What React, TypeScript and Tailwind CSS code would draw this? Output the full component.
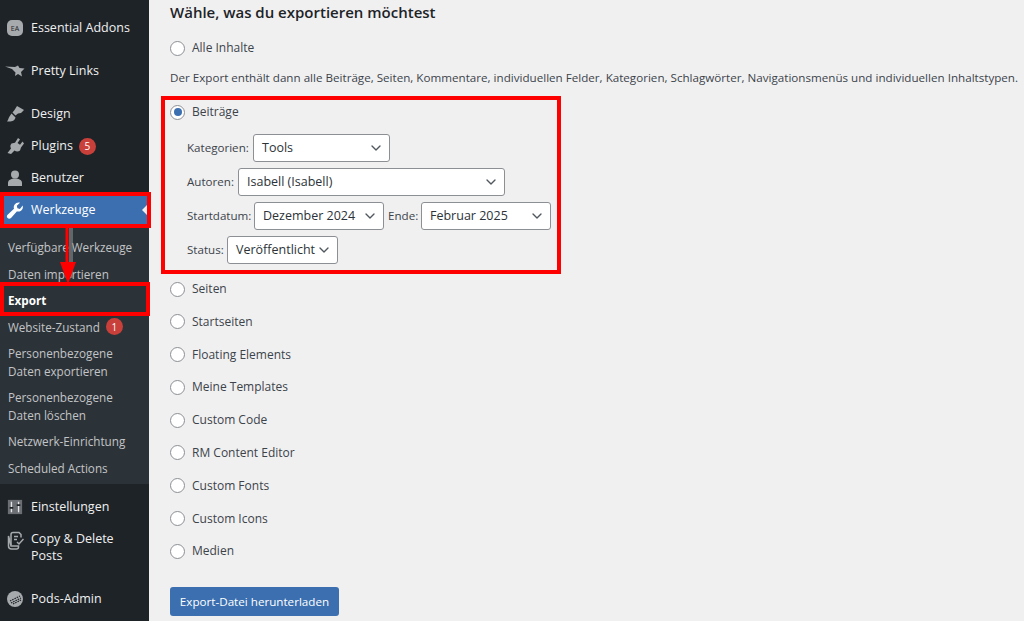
import { ChevronDown } from 'lucide-react';
import type { ReactNode } from 'react';

const font = "font-['Open_Sans','Noto_Sans',sans-serif]";

function Radio({ label, checked = false, className = '' }: { label: string; checked?: boolean; className?: string }) {
  return (
    <div className={`flex items-center gap-[7px] ${className}`}>
      <span className="flex h-[15px] w-[15px] items-center justify-center rounded-full border border-[#8c8f94] bg-white">
        {checked && <span className="h-[8px] w-[8px] rounded-full bg-[#3b6fb0]" />}
      </span>
      <span className="text-[12px] text-[#3c434a]">{label}</span>
    </div>
  );
}

function Select({ value, className }: { value: string; className: string }) {
  return (
    <div className={`flex h-[28px] items-center justify-between rounded-[3px] border border-[#8c8f94] bg-white pl-[8px] pr-[5px] text-[12.5px] text-[#2c3338] ${className}`}>
      <span className="whitespace-nowrap">{value}</span>
      <ChevronDown size={16} strokeWidth={2} className="text-[#50575e]" />
    </div>
  );
}

function MenuItem({ icon, children, className = '' }: { icon: ReactNode; children: ReactNode; className?: string }) {
  return (
    <div className={`flex items-center text-[12.5px] text-[#f0f0f1] ${className}`}>
      <span className="flex w-[31px] shrink-0 justify-center pr-[2px] text-[#a7aaad]">{icon}</span>
      {children}
    </div>
  );
}

function Sub({ children, className = 'h-[26.5px]' }: { children: ReactNode; className?: string }) {
  return <div className={`flex items-center pl-[8px] text-[11.7px] leading-[18px] text-[#c3c4c7] ${className}`}>{children}</div>;
}

function Badge({ n }: { n: number }) {
  return (
    <span className="ml-[6px] flex h-[17px] w-[17px] items-center justify-center rounded-full bg-[#c9403a] text-[10px] text-white">{n}</span>
  );
}

const ic = 'h-[18px] w-[18px] fill-current';
const row = 'flex h-[28px] items-center gap-[3px] pl-[17px] text-[11.6px] text-[#3c434a]';

export default function App() {
  return (
    <div className={`relative flex h-[621px] w-[1024px] overflow-hidden bg-[#f0f0f1] ${font}`}>
      <aside className="flex w-[149px] shrink-0 flex-col bg-[#1d2327]">
        <MenuItem className="mt-[16px] h-[24px]" icon={
          <svg viewBox="0 0 18 18" className={ic}><rect x="1" y="1" width="16" height="16" rx="5" /><text x="9" y="12" textAnchor="middle" fontSize="7" fill="#1d2327">EA</text></svg>
        }>Essential Addons</MenuItem>
        <MenuItem className="mt-[19px] h-[24px]" icon={
          <svg viewBox="0 0 20 18" className="h-[18px] w-[20px] fill-current"><path d="M0 4.500l10 .5 3-1.500 1.500 2.500 5 .5-3.500 3.500 1 4.500-4-2.500-3 2 .5-3.500L7 7z" /></svg>
        }>Pretty Links</MenuItem>
        <MenuItem className="mt-[19px] h-[24px]" icon={
          <svg viewBox="0 0 18 18" className={ic}><path d="M11 1l7 4-3 3-3 .5-2.500 2-3-3 2-2.500zM5.500 8.500l4 4c-.5 2-1.500 3-3 3.500-2 .5-4 .7-5.500.5C2.500 15 2 13.500 3.500 11.500z" /></svg>
        }>Design</MenuItem>
        <MenuItem className="mt-[8px] h-[24px]" icon={
          <svg viewBox="0 0 18 18" className={ic}><path d="M12 1l2 1.500-2.500 3.500 2.500 1.800L16.500 4.500 18 6.500l-3 4-1 3c-2 1.500-4 1-5.500 0L5 17l-3.500-1 3.500-4.500c-1-2-.8-3.500.5-5l3.500-.8z" /></svg>
        }>Plugins<Badge n={5} /></MenuItem>
        <MenuItem className="mt-[8px] h-[24px]" icon={
          <svg viewBox="0 0 18 18" className={ic}><circle cx="9" cy="5.500" r="4" /><path d="M2 17v-3c0-3 3-4.500 7-4.500s7 1.500 7 4.500v3z" /></svg>
        }>Benutzer</MenuItem>
        <MenuItem className="relative mt-[5px] h-[30px] bg-[#3b6fb0] text-white [&>span:first-child]:text-white" icon={
          <svg viewBox="0 0 18 18" className={ic}><path d="M16.700 4.500c.6 2-.1 4-1.700 5.200-1.300.9-2.800 1.100-4.200.7L5 17c-1 1-2.500 1-3.400.1-1-1-1-2.400 0-3.400l6.400-6C7.500 6.300 7.800 4.800 8.700 3.500 9.900 1.800 12 1.100 14 1.700L10.800 4.800l.6 2.500 2.500.6z" /></svg>
        }>
          Werkzeuge
          <span className="absolute right-0 top-[8px] h-0 w-0 border-y-[7px] border-r-[7px] border-y-transparent border-r-[#f0f0f1]" />
        </MenuItem>
        <div className="flex h-[259px] flex-col bg-[#2c3338] pt-[9px]">
          <Sub>Verfügbare Werkzeuge</Sub>
          <Sub className="h-[26px]">Daten importieren</Sub>
          <Sub className="h-[27px] font-bold !text-white">Export</Sub>
          <Sub>Website-Zustand<Badge n={1} /></Sub>
          <Sub className="h-[44px]"><span>Personenbezogene<br />Daten exportieren</span></Sub>
          <Sub className="h-[44px]"><span>Personenbezogene<br />Daten löschen</span></Sub>
          <Sub>Netzwerk-Einrichtung</Sub>
          <Sub>Scheduled Actions</Sub>
        </div>
        <MenuItem className="mt-[11px] h-[24px]" icon={
          <svg viewBox="0 0 18 18" className="h-[16px] w-[16px]"><rect x="1" y="1" width="16" height="16" fill="#6b6f74" /><path d="M5 3v12M13 3v12" stroke="#e6e6e6" strokeWidth="1.500" /><path d="M3 10h4M11 7h4" stroke="#1d2327" strokeWidth="2" /></svg>
        }>Einstellungen</MenuItem>
        <div className="mt-[11px] flex text-[12.5px] leading-[17px] text-[#f0f0f1]">
          <span className="flex w-[31px] shrink-0 justify-center pr-[1px] pt-[1px] text-[#a7aaad]">
            <svg viewBox="0 0 18 20" fill="none" stroke="currentColor" strokeWidth="1.500" className="h-[20px] w-[18px]"><path d="M5 14V3.500A2 2 0 017 1.500h6l2 2v3" /><path d="M2.500 5v10a3 3 0 003 3h5a2 2 0 002-2v-1H5z" /><path d="M8 5.500h4M8 8.500h3M11 11l2 2 4.500-5" /></svg>
          </span>
          <span>Copy &amp; Delete<br />Posts</span>
        </div>
        <MenuItem className="mt-[23px] h-[24px]" icon={
          <svg viewBox="0 0 18 18" className={ic}><circle cx="9" cy="9" r="8" /><path d="M4 11l10-5M5 13l10-5M7 14l8-4" stroke="#1d2327" strokeWidth="1.200" strokeDasharray="1.500 1" /></svg>
        }>Pods-Admin</MenuItem>
      </aside>

      <main className="flex min-w-0 flex-1 flex-col pl-[21px]">
        <h2 className="mt-[1px] text-[15px] font-semibold leading-[22px] text-[#1d2327]">Wähle, was du exportieren möchtest</h2>
        <Radio label="Alle Inhalte" className="mt-[14px] h-[22px]" />
        <p className="mt-[9px] h-[20px] whitespace-nowrap text-[11.63px] leading-[20px] text-[#3c434a]">
          Der Export enthält dann alle Beiträge, Seiten, Kommentare, individuellen Felder, Kategorien, Schlagwörter, Navigationsmenüs und individuellen Inhaltstypen.
        </p>
        <Radio label="Beiträge" checked className="mt-[13px] h-[22px]" />
        <div className={`mt-[11px] ${row}`}>
          <span className="w-[63px] whitespace-nowrap">Kategorien:</span>
          <Select value="Tools" className="w-[137px]" />
        </div>
        <div className={`mt-[6px] ${row}`}>
          <span className="w-[48px]">Autoren:</span>
          <Select value="Isabell (Isabell)" className="w-[267px]" />
        </div>
        <div className={`mt-[6px] ${row}`}>
          <span className="w-[64px]">Startdatum:</span>
          <Select value="Dezember 2024" className="w-[130px]" />
          <span className="ml-[1px] w-[30px]">Ende:</span>
          <Select value="Februar 2025" className="w-[130px]" />
        </div>
        <div className={`mt-[6px] ${row}`}>
          <span className="w-[37px]">Status:</span>
          <Select value="Veröffentlicht" className="w-[111px]" />
        </div>
        <div className="mt-[14px] flex flex-col gap-[10.800px]">
          {['Seiten', 'Startseiten', 'Floating Elements', 'Meine Templates', 'Custom Code', 'RM Content Editor', 'Custom Fonts', 'Custom Icons', 'Medien'].map((l) => (
            <Radio key={l} label={l} className="h-[22px]" />
          ))}
        </div>
        <button className="mt-[25px] flex h-[29px] w-[169px] items-center justify-center rounded-[3px] bg-[#3b6fb0] text-[11.650px] text-white">
          Export-Datei herunterladen
        </button>
      </main>

      {/* annotations drawn over the screenshot */}
      <svg viewBox="0 0 24 70" className="absolute left-[56px] top-[228px] h-[70px] w-[24px]">
        <path d="M15 0v50" stroke="#8c8f94" strokeOpacity="0.55" strokeWidth="4" />
        <path d="M11 0v40" stroke="#fe0000" strokeWidth="3" />
        <path d="M4 34h16l-8 22z" fill="#fe0000" />
      </svg>
      <div className="absolute left-0 top-[192px] h-[36px] w-[151px] border-[4px] border-[#fe0000]" />
      <div className="absolute left-0 top-[282px] h-[34px] w-[150px] border-[4px] border-[#fe0000]" />
      <div className="absolute left-[161px] top-[96px] h-[178px] w-[400px] border-[4px] border-[#fe0000]" />
    </div>
  );
}
